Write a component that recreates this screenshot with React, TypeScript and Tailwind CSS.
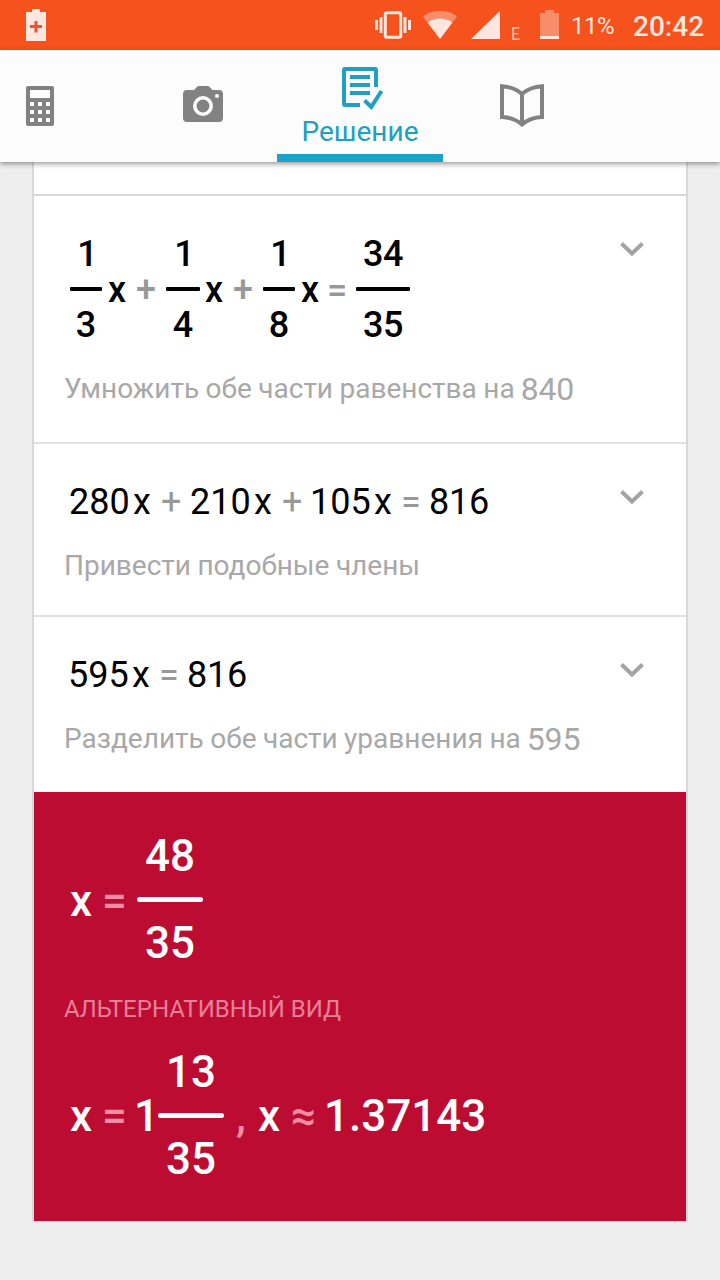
import type { ReactNode } from "react";
import clsx from "clsx";

function StatusBar() {
  return (
    <div className="flex h-[50px] items-center bg-[#f6521e] text-[#ffe6de]">
      <svg className="ml-[26px] h-8 w-5" viewBox="0 0 20 32" fill="currentColor">
        <path d="M6 0h8v3h6v29H0V3h6z" />
        <path d="M8.500 12h3v4h4.500v3h-4.500v4.500h-3V19H4v-3h4.500z" fill="#f0532c" />
      </svg>

      <svg className="ml-[329px] h-7 w-9" viewBox="0 0 36 28" fill="currentColor">
        <path d="M0 9h3v10H0zM4.500 6h3v16h-3zM28.500 6h3v16h-3zM33 9h3v10h-3z" />
        <rect x="10.300" y="1.800" width="15.400" height="24.400" rx="1.500" fill="none" stroke="currentColor" strokeWidth="3" />
      </svg>
      <svg className="ml-[12px] h-7 w-[34px]" viewBox="0 0 34 28" fill="currentColor">
        <path d="M0 5.500C9-1.800 25-1.800 34 5.500L17 28z" opacity=".4" />
        <path d="M4.800 11.800C11 6.200 23 6.200 29.200 11.800L17 28z" />
      </svg>
      <svg className="ml-[14px] h-7 w-[29px]" viewBox="0 0 29 28" fill="currentColor">
        <path d="M29 0v28H0z" />
      </svg>
      <span className="ml-[11px] mt-[17px] w-[14px] origin-left scale-x-[.85] text-[19px] leading-none opacity-75">E</span>
      <svg className="ml-[15px] h-[30px] w-[19px]" viewBox="0 0 19 30" fill="currentColor">
        <path d="M5 0h9v3h5v23H0V3h5z" opacity=".4" />
        <path d="M0 26h19v3H0z" />
      </svg>
      <span className="ml-3 mt-[2px] w-[62px] whitespace-nowrap text-2xl tracking-[-0.5px]">11%</span>
      <span className="mt-[3px] whitespace-nowrap text-[28px] font-medium leading-none">20:42</span>
    </div>
  );
}

function TabBar() {
  return (
    <nav className="relative z-10 flex h-[112px] bg-[#fcfcfc] text-[#828282] shadow-[0_2px_5px_rgba(0,0,0,0.4)]">
      <div className="w-[120px] pl-[26px] pt-9">
        <svg className="h-10 w-7" viewBox="0 0 28 40" fill="currentColor">
          <rect width="28" height="40" rx="2" />
          <path
            fill="#fcfcfc"
            d="M4 4h20v8H4zM4 16h4v4H4zM12 16h4v4h-4zM20 16h4v4h-4zM4 24h4v4H4zM12 24h4v4h-4zM20 24h4v4h-4zM4 32h4v4H4zM12 32h4v4h-4zM20 32h4v4h-4z"
          />
        </svg>
      </div>
      <div className="w-[157px] pl-[63px] pt-9">
        <svg className="h-9 w-10" viewBox="0 0 40 36" fill="currentColor">
          <path d="M4 4h7l3-3.200Q15 0 16 0h8.500q1 0 2 .8L29.500 4H36q4 0 4 4v24q0 4-4 4H4q-4 0-4-4V8q0-4 4-4z" />
          <circle cx="20" cy="20" r="8.200" fill="none" stroke="#fcfcfc" strokeWidth="3.600" />
          <circle cx="34" cy="10" r="2" fill="#fcfcfc" />
        </svg>
      </div>
      <div className="flex w-[166px] flex-col items-center border-b-8 border-[#1aa2c8] pt-[17px] text-[#219fc1]">
        <svg className="ml-[6px] h-11 w-[42px] shrink-0" viewBox="0 0 42 44" fill="none" stroke="currentColor" strokeWidth="4">
          <path d="M18 38H3q-1 0-1-1V3q0-1 1-1h30q1 0 1 1v17" />
          <path d="M8 10h20M8 18h20M8 26h20" />
          <path d="M22.500 33.500l6.800 6.300L39.500 24" />
        </svg>
        <span className="mt-[5px] text-[28px] leading-8">Решение</span>
      </div>
      <div className="pl-[57px] pt-[34px]">
        <svg className="h-[43px] w-11" viewBox="0 0 44 43" fill="none" stroke="currentColor" strokeWidth="4">
          <path d="M2 2.200Q14 2.800 22 10Q30 2.800 42 2.200V33Q30 33.500 22 40.500Q14 33.500 2 33z" />
          <path d="M22 9v31" />
        </svg>
      </div>
    </nav>
  );
}

function Token({ className, muted, children }: { className?: string; muted?: boolean; children: ReactNode }) {
  return <span className={clsx("shrink-0 whitespace-nowrap", muted && "opacity-40", className)}>{children}</span>;
}

function Fraction({ top, bottom, className }: { top: string; bottom: string; className?: string }) {
  return (
    <div className={clsx("flex shrink-0 flex-col items-center", className)}>
      <span className={clsx(top.length === 1 && "pl-[3px]")}>{top}</span>
      <span className="mb-4 mt-[15px] h-1 w-full rounded-[1px] bg-black" />
      <span>{bottom}</span>
    </div>
  );
}

function ResultFraction({ top, bottom, className }: { top: string; bottom: string; className?: string }) {
  return (
    <div className={clsx("flex w-[66px] shrink-0 flex-col items-center gap-[19px]", className)}>
      <span>{top}</span>
      <span className="h-[5px] w-full rounded-sm bg-white" />
      <span>{bottom}</span>
    </div>
  );
}

function Step({
  className,
  hint,
  value,
  children,
}: {
  className: string;
  hint: string;
  value?: string;
  children: ReactNode;
}) {
  return (
    <section className={clsx("flex justify-between border-[#e2e2e2] pl-[30px] pr-[42px] pt-10", className)}>
      <div>
        <div className="flex items-center text-4xl leading-[36px] text-black">{children}</div>
        <p className="mt-[30px] flex whitespace-nowrap text-[28px] leading-8 text-[#a8a8a8] [word-spacing:-0.5px]">
          {hint}
          {value && <span className="ml-1.5 text-[32px] tracking-[-0.2px]">{value}</span>}
        </p>
      </div>
      <svg className="mt-1.5 h-[14px] w-6 shrink-0" viewBox="0 0 24 14" fill="none" stroke="#a3a3a5" strokeWidth="4">
        <path d="M1.500 1.500L12 11.500L22.500 1.500" />
      </svg>
    </section>
  );
}

export default function App() {
  return (
    <div className="h-[1280px] w-[720px] overflow-hidden bg-[#eeeeee] font-['Roboto',sans-serif]">
      <StatusBar />
      <TabBar />
      <main className="mx-8 h-[1060px] border-x-2 border-b-2 border-[#d8d8d8] bg-white">
        <div className="h-[34px] border-b-2 border-[#d8d8d8]" />

        <Step className="h-[248px] border-b-2" hint="Умножить обе части равенства на" value="840">
          <div className="flex items-center pl-1.5 font-medium">
            <Fraction className="w-8" top="1" bottom="3" />
            <Token className="ml-1.5 w-7 pt-px">x</Token>
            <Token className="w-[30px] pt-px" muted>+</Token>
            <Fraction className="w-[34px]" top="1" bottom="4" />
            <Token className="ml-[5px] w-7 pt-px">x</Token>
            <Token className="w-[30px] pt-px" muted>+</Token>
            <Fraction className="w-8" top="1" bottom="8" />
            <Token className="ml-1.5 w-[26px] pt-px">x</Token>
            <Token className="w-[29px] pt-px" muted>=</Token>
            <Fraction className="w-[54px] tracking-[-0.5px]" top="34" bottom="35" />
          </div>
        </Step>

        <Step className="h-[173px] border-b-2" hint="Привести подобные члены">
          <Token className="ml-[5px] w-16">280</Token>
          <Token className="w-7">x</Token>
          <Token className="w-[29px]" muted>+</Token>
          <Token className="w-16">210</Token>
          <Token className="w-7">x</Token>
          <Token className="w-7" muted>+</Token>
          <Token className="w-16">105</Token>
          <Token className="w-[27px]">x</Token>
          <Token className="w-7" muted>=</Token>
          <Token className="tracking-[-0.2px]">816</Token>
        </Step>

        <Step className="h-[175px]" hint="Разделить обе части уравнения на" value="595">
          <Token className="ml-1 w-16">595</Token>
          <Token className="w-[27px]">x</Token>
          <Token className="w-7" muted>=</Token>
          <Token className="tracking-[-0.2px]">816</Token>
        </Step>

        <section className="h-[429px] bg-[#bd0c32] pl-[30px] pt-[42px] text-white">
          <div className="flex items-center pl-1.5 text-[44px] font-medium leading-[44px]">
            <Token className="w-8 pt-[3px]">x</Token>
            <Token className="w-[35px] pt-[3px] text-[#f08ca3]">=</Token>
            <ResultFraction top="48" bottom="35" />
          </div>
          <p className="mt-[30px] text-2xl leading-7 text-[#e87f98]">АЛЬТЕРНАТИВНЫЙ ВИД</p>
          <div className="mt-[27px] flex items-center pl-1.5 text-[44px] font-medium leading-[44px]">
            <Token className="w-8">x</Token>
            <Token className="w-8 text-[#f08ca3]">=</Token>
            <Token className="w-6">1</Token>
            <ResultFraction top="13" bottom="35" />
            <Token className="ml-3 w-[22px] text-[#f08ca3]">,</Token>
            <Token className="w-[33px]">x</Token>
            <Token className="w-[33px] text-[#f08ca3]">≈</Token>
            <Token>1.37143</Token>
          </div>
        </section>
      </main>
    </div>
  );
}
